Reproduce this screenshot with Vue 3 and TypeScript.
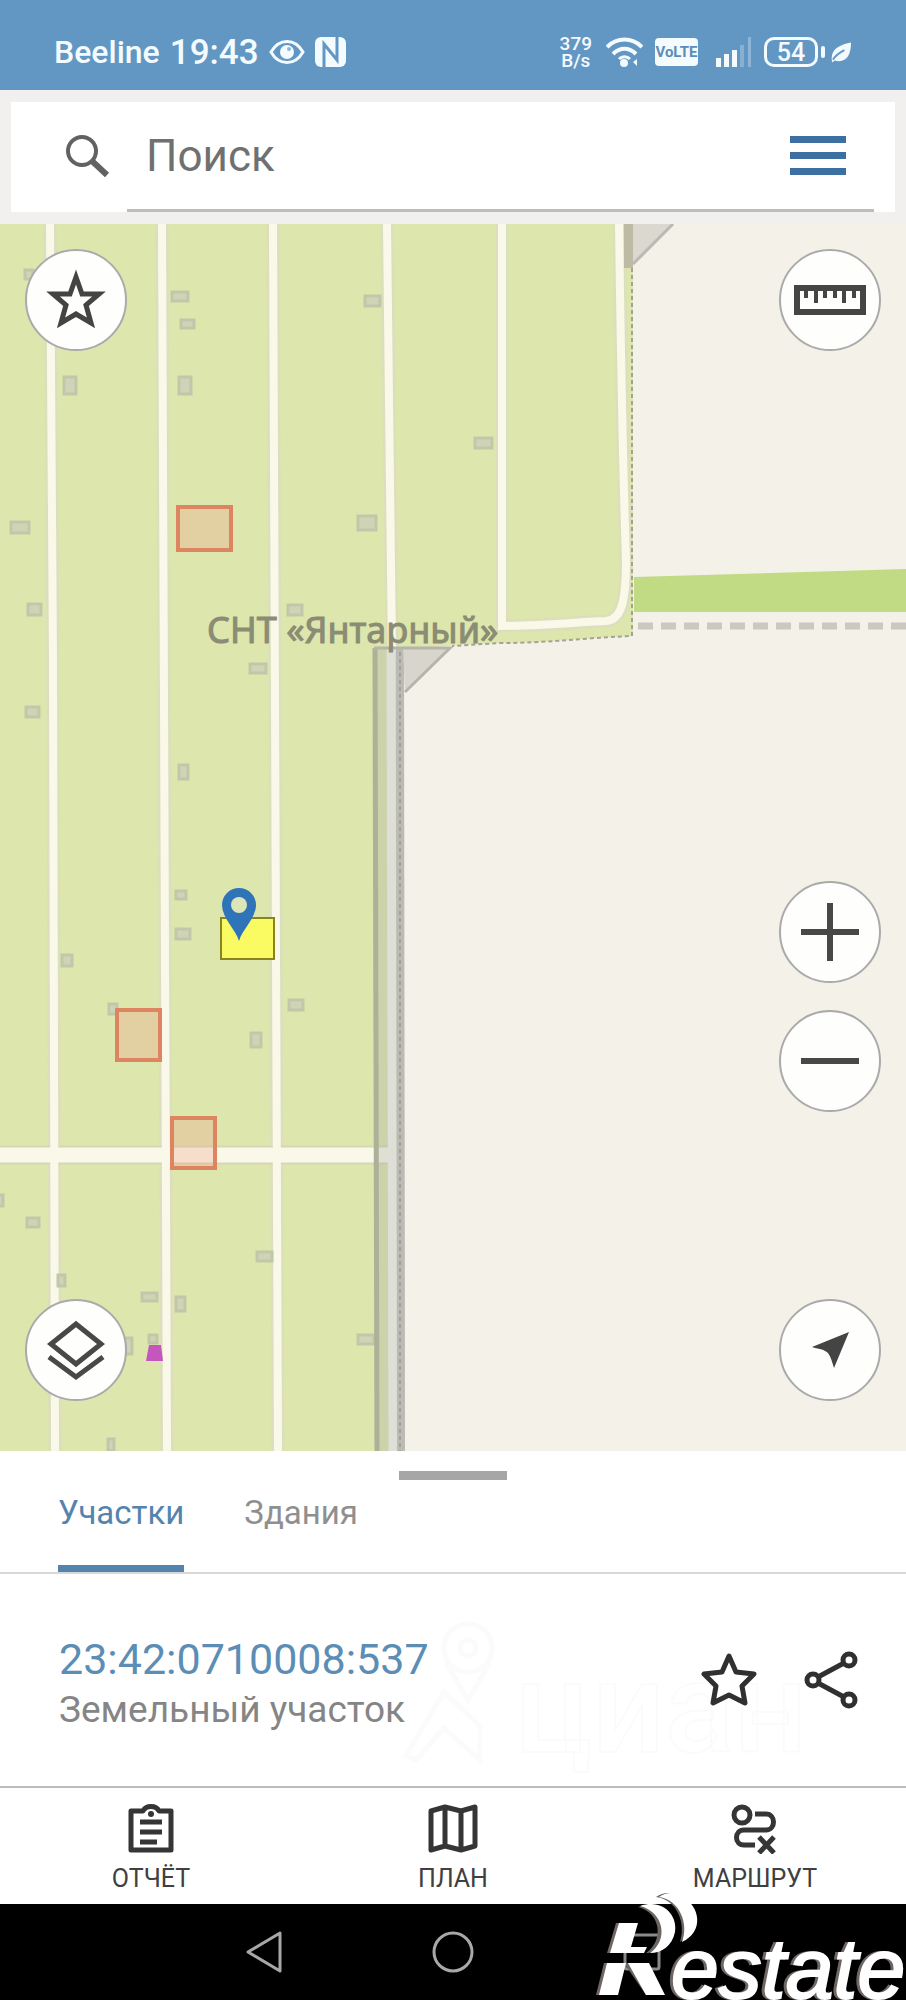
<script setup lang="ts">
import { ref } from 'vue'

interface Box {
  x: number
  y: number
  w: number
  h: number
}

const query = ref('')
const activeTab = ref('plots')

const tabs = [
  { id: 'plots', label: 'Участки' },
  { id: 'buildings', label: 'Здания' },
]

const roads = [
  'M50 224 L53 660 L55 1451',
  'M162 224 L164 700 L167 1451',
  'M273 224 L275 700 L278 1451',
  'M387 224 L389 400 L392 652',
  'M502 224 L502 626',
  'M619 224 C621 360 622 440 626 560 C626 600 622 620 606 621 C580 622 540 626 498 626',
]

const houses: Box[] = [
  { x: 172, y: 292, w: 16, h: 9 },
  { x: 181, y: 320, w: 13, h: 8 },
  { x: 64, y: 377, w: 12, h: 17 },
  { x: 179, y: 377, w: 12, h: 17 },
  { x: 365, y: 296, w: 15, h: 10 },
  { x: 475, y: 438, w: 17, h: 10 },
  { x: 11, y: 522, w: 18, h: 11 },
  { x: 358, y: 516, w: 18, h: 14 },
  { x: 28, y: 604, w: 13, h: 11 },
  { x: 288, y: 605, w: 14, h: 10 },
  { x: 250, y: 664, w: 16, h: 9 },
  { x: 26, y: 707, w: 13, h: 10 },
  { x: 179, y: 765, w: 9, h: 14 },
  { x: 176, y: 891, w: 10, h: 8 },
  { x: 176, y: 929, w: 14, h: 10 },
  { x: 62, y: 955, w: 10, h: 11 },
  { x: 109, y: 1004, w: 8, h: 10 },
  { x: 289, y: 1000, w: 14, h: 10 },
  { x: 251, y: 1033, w: 10, h: 14 },
  { x: -6, y: 1195, w: 9, h: 11 },
  { x: 27, y: 1218, w: 12, h: 9 },
  { x: 257, y: 1252, w: 15, h: 9 },
  { x: 58, y: 1275, w: 7, h: 11 },
  { x: 142, y: 1293, w: 15, h: 8 },
  { x: 176, y: 1297, w: 9, h: 14 },
  { x: 358, y: 1335, w: 16, h: 9 },
  { x: 125, y: 1338, w: 7, h: 16 },
  { x: 149, y: 1335, w: 8, h: 8 },
  { x: 108, y: 1439, w: 6, h: 12 },
  { x: 25, y: 270, w: 8, h: 9 },
]

const parcels: Box[] = [
  { x: 178, y: 507, w: 53, h: 43 },
  { x: 117, y: 1010, w: 43, h: 50 },
  { x: 172, y: 1118, w: 43, h: 50 },
]
</script>

<template>
  <div class="screen">
    <header class="status">
      <div class="status-side left">
        <span class="carrier">Beeline</span>
        <span class="clock">19:43</span>
        <svg width="36" height="26" viewBox="0 0 36 26" fill="none" stroke="#f3fbff" stroke-width="3">
          <path d="M2 13 C10 -1 26 -1 34 13 C26 27 10 27 2 13 Z" />
          <circle cx="18" cy="13" r="7" fill="#f3fbff" stroke="none" />
          <circle cx="20" cy="10" r="2" fill="#8fb6d6" stroke="none" />
        </svg>
        <svg width="31" height="30" viewBox="0 0 31 30" fill="none">
          <rect width="31" height="30" rx="6" fill="#f3fbff" />
          <path d="M9 30 V7 L22 23 V0" stroke="#6397c3" stroke-width="3" />
        </svg>
      </div>
      <div class="status-side right">
        <span class="speed"><span>379</span><span>B/s</span></span>
        <svg width="37" height="30" viewBox="0 0 37 30" fill="none" stroke="#f3fbff" stroke-width="4">
          <path d="M1 10 C11 0 26 0 36 10" />
          <path d="M7 17 C14 10 23 10 30 17" />
          <path d="M13 22 C16 19 21 19 24 22" stroke-width="3" />
          <circle cx="18" cy="26" r="4" fill="#f3fbff" stroke="none" />
          <path d="M31 22 V29 L27 25 Z" fill="#f3fbff" stroke="none" />
        </svg>
        <span class="volte">VoLTE</span>
        <svg class="signal" width="36" height="30" viewBox="0 0 36 30" fill="#f3fbff">
          <rect x="0" y="21" width="5" height="9" />
          <rect x="8" y="17" width="5" height="13" />
          <rect x="16" y="13" width="5" height="17" />
          <rect x="24" y="8" width="4" height="22" opacity=".25" />
          <rect x="32" y="0" width="3" height="30" opacity=".3" />
        </svg>
        <span class="battery">54</span>
        <svg width="22" height="22" viewBox="3 0 23 22">
          <path d="M5 20 C3 8 14 3 25 1 C25 14 20 23 8 20 L5 22 Z" fill="#f3fbff" />
          <path d="M6 19 C10 13 14 11 18 9" fill="none" stroke="#6397c3" stroke-width="2" />
        </svg>
      </div>
    </header>

    <div class="search-wrap">
      <form class="search" @submit.prevent>
        <svg class="magnifier" width="44" height="44" viewBox="0 0 44 44" fill="none" stroke="#626262">
          <circle cx="16" cy="16" r="14" stroke-width="4" />
          <path d="M26 26 L41 40" stroke-width="6" />
        </svg>
        <div class="field">
          <input v-model="query" type="text" placeholder="Поиск" aria-label="Поиск" />
          <button type="button" class="menu" aria-label="Меню">
            <i></i><i></i><i></i>
          </button>
        </div>
      </form>
    </div>

    <main class="map">
      <svg class="tiles" viewBox="0 224 906 1227" preserveAspectRatio="xMinYMin slice" aria-hidden="true">
        <rect x="0" y="224" width="906" height="1227" fill="#f4f1e8" />
        <path d="M0 224 H633 V636 C580 638 550 643 500 643 C450 645 420 648 403 650 V1451 H0 Z" fill="#dde6ac" />
        <path d="M634 577 L906 569 V612 H634 Z" fill="#c1db85" />
        <g fill="none" stroke="#dcdfbd" stroke-width="13">
          <path v-for="d in roads" :key="d" :d="d" />
        </g>
        <path d="M0 1155 H390" fill="none" stroke="#d5d8b4" stroke-width="19" />
        <g fill="none" stroke="#faf8e9" stroke-width="8">
          <path v-for="d in roads" :key="d" :d="d" />
          <path d="M0 1155 H390" stroke-width="15" />
        </g>
        <path d="M638 626 H906" stroke="#cbc8be" stroke-width="7" stroke-dasharray="15 8" />
        <g fill="#d0d4b6" stroke="#c2c7aa" stroke-width="3">
          <rect v-for="(b, i) in houses" :key="i" :x="b.x" :y="b.y" :width="b.w" :height="b.h" />
        </g>
        <path d="M146 1361 L149 1345 H161 L163 1361 Z" fill="#c556bd" />
        <path d="M624 224 H633 V268 H624 Z" fill="#bdbba4" />
        <path d="M633 224 H674 L633 264 Z" fill="#dbd8d0" />
        <path d="M673 224 L633 264" stroke="#bcb9b2" stroke-width="3" />
        <path d="M373 648 H403 L405 1451 H375 Z" fill="#a4a4a4" fill-opacity=".3" />
        <path d="M391 648 L393 1451" stroke="#dedfd7" stroke-width="9" />
        <path d="M375 648 L377 1451" stroke="#adb198" stroke-width="5" />
        <path d="M400 648 L401 1451" stroke="#bcbab4" stroke-width="8" />
        <path d="M403 648 H451 L405 692 Z" fill="#d8d5cd" />
        <path d="M374 648 H450 L405 692" fill="none" stroke="#b7b4ac" stroke-width="3" />
        <g fill="none" stroke="#a4a296" stroke-width="2" stroke-dasharray="4 3">
          <path d="M632 268 V636 C580 638 550 643 500 643 L452 646" />
          <path d="M400 652 V1451" />
        </g>
        <text x="207" y="643" class="place">СНТ «Янтарный»</text>
        <g fill="#f2a08a" fill-opacity=".3" stroke="#dd8460" stroke-width="4">
          <rect v-for="p in parcels" :key="p.y" :x="p.x" :y="p.y" :width="p.w" :height="p.h" />
        </g>
        <rect x="221" y="918" width="53" height="41" fill="#fafa62" stroke="#8a8420" stroke-width="2" />
        <path d="M239 941 C236 930 222 918 222 905 A17 17 0 0 1 256 905 C256 918 242 930 239 941 Z" fill="#2f74b8" />
        <circle cx="239" cy="905" r="8" fill="#dde6b8" />
      </svg>

      <div class="controls top">
        <button type="button" class="round" aria-label="Избранное">
          <svg width="62" height="62" viewBox="0 0 62 62" fill="none" stroke="#444" stroke-width="5">
            <path d="M31 8 L37 25 L54 25 L41 36 L46 54 L31 45 L16 54 L21 36 L8 25 L25 25 Z" />
          </svg>
        </button>
        <button type="button" class="round" aria-label="Линейка">
          <svg width="72" height="30" viewBox="0 0 72 30" fill="none" stroke="#454545">
            <rect x="3" y="3" width="66" height="24" stroke-width="6" />
            <path d="M12 5 V13 M22 5 V18 M31 5 V13 M41 5 V13 M50 5 V18 M60 5 V13" stroke-width="4" />
          </svg>
        </button>
      </div>

      <div class="controls bottom">
        <button type="button" class="round" aria-label="Слои">
          <svg width="62" height="62" viewBox="0 0 62 62" fill="none" stroke="#484848" stroke-width="5">
            <path d="M31 5 L56 25 L31 45 L6 25 Z" />
            <path d="M4 38 L31 58 L58 38" />
          </svg>
        </button>
        <div class="stack">
          <div class="zoom">
            <button type="button" class="round" aria-label="Приблизить">
              <svg width="60" height="60" viewBox="0 0 60 60" stroke="#484848" stroke-width="6">
                <path d="M1 30 H59 M30 1 V59" />
              </svg>
            </button>
            <button type="button" class="round" aria-label="Отдалить">
              <svg width="60" height="60" viewBox="0 0 60 60" stroke="#484848" stroke-width="6">
                <path d="M1 30 H59" />
              </svg>
            </button>
          </div>
          <button type="button" class="round" aria-label="Моё местоположение">
            <svg width="38" height="38" viewBox="0 0 38 38" fill="#444">
              <path d="M38 1 L23 37 C21 31 20 26 17 22 C13 18 7 18 1 16 Z" />
            </svg>
          </button>
        </div>
      </div>
    </main>

    <section class="sheet">
      <div class="handle"></div>
      <nav class="tabs" role="tablist">
        <button
          v-for="t in tabs"
          :key="t.id"
          type="button"
          role="tab"
          :aria-selected="activeTab === t.id"
          :class="['tab', { active: activeTab === t.id }]"
          @click="activeTab = t.id"
        >
          {{ t.label }}
        </button>
      </nav>
      <article class="item">
        <svg class="mark" width="440" height="170" viewBox="0 0 440 170" fill="none" stroke="#fbfbfb" stroke-width="5">
          <circle cx="68" cy="32" r="24" />
          <circle cx="68" cy="32" r="8" />
          <path d="M46 46 L68 84 L90 46 M6 140 L44 76 L80 110 L80 144 L44 112 L16 144 Z" />
          <text x="115" y="136" class="mark-text">циан</text>
        </svg>
        <div class="item-text">
          <a href="#" class="number">23:42:0710008:537</a>
          <p class="kind">Земельный участок</p>
        </div>
        <div class="actions">
          <button type="button" aria-label="В избранное">
            <svg width="56" height="56" viewBox="0 0 56 56" fill="none" stroke="#303030" stroke-width="5" stroke-linejoin="round">
              <path d="M28 4 L35 20 L53 22 L41 34 L44 51 L28 43 L12 51 L15 34 L3 22 L21 20 Z" />
            </svg>
          </button>
          <button type="button" aria-label="Поделиться">
            <svg width="54" height="58" viewBox="0 0 54 58" fill="none" stroke="#303030" stroke-width="5">
              <circle cx="9" cy="29" r="6" />
              <circle cx="45" cy="9" r="6" />
              <circle cx="45" cy="49" r="6" />
              <path d="M14 26 L40 12 M14 32 L40 46" />
            </svg>
          </button>
        </div>
      </article>
    </section>

    <nav class="bottom-nav">
      <button type="button">
        <svg width="50" height="50" viewBox="0 0 50 50" fill="none" stroke="#353535" stroke-width="5" stroke-linejoin="round">
          <path d="M5 7 H17 C20 1 30 1 33 7 H45 V46 H5 Z" />
          <path d="M14 18 H36 M14 28 H36 M14 38 H31" />
          <circle cx="25" cy="10" r="3" fill="#353535" stroke="none" />
        </svg>
        <span>ОТЧЁТ</span>
      </button>
      <button type="button">
        <svg width="50" height="50" viewBox="0 0 50 50" fill="none" stroke="#353535" stroke-width="5" stroke-linejoin="round">
          <path d="M3 7 L17 3 L33 7 L47 3 V42 L33 46 L17 42 L3 46 Z M17 3 V42 M33 7 V46" />
        </svg>
        <span>ПЛАН</span>
      </button>
      <button type="button">
        <svg width="50" height="50" viewBox="0 0 50 50" fill="none" stroke="#353535" stroke-width="5">
          <circle cx="12" cy="11" r="8" />
          <path d="M25 10 H36 C46 10 46 26 36 26 H14 C4 26 4 41 14 41 H25" />
          <path d="M29 33 L44 49 M44 33 L29 49" />
        </svg>
        <span>МАРШРУТ</span>
      </button>
    </nav>

    <footer class="system">
      <button type="button" aria-label="Назад">
        <svg width="44" height="44" viewBox="0 0 44 44" fill="none" stroke="#a8a8a8" stroke-width="3" stroke-linejoin="round">
          <path d="M38 3 V41 L6 22 Z" />
        </svg>
      </button>
      <button type="button" aria-label="Домой">
        <svg width="44" height="44" viewBox="0 0 44 44" fill="none" stroke="#a8a8a8" stroke-width="3">
          <circle cx="22" cy="22" r="19" />
        </svg>
      </button>
      <button type="button" aria-label="Недавние">
        <svg width="44" height="44" viewBox="0 0 44 44" fill="none" stroke="#8a8a8a" stroke-width="3">
          <rect x="5" y="5" width="34" height="34" rx="2" />
        </svg>
      </button>
      <svg class="brand" width="326" height="120" viewBox="0 0 326 120" role="img" aria-label="Restate">
        <g fill="#6e6663">
          <path d="M36 43 H55 L47 73 H27 Z M24 83 H46 L35 115 H16 Z M44 83 L66 115 H80 L60 83 Z" />
          <path d="M58 27 C80 20 94 38 92 52 C90 64 79 73 66 73 C85 60 80 32 58 27 Z" />
          <path d="M76 17 C83 12 92 12 98 16 C112 26 118 50 100 62 C106 44 98 20 76 17 Z" />
        </g>
        <g fill="#fff">
          <path d="M39 43 H58 L51 67 H67 L64 73 H30 Z M27 83 H46 L38 115 H19 Z M48 83 H69 L85 115 H66 Z" />
          <path d="M60 26 C83 18 98 36 95 52 C92 66 82 73 70 73 C89 60 84 32 60 26 Z" />
          <path d="M79 17 C86 12 95 12 101 16 C121 26 124 52 102 62 C109 44 100 20 79 17 Z" />
        </g>
        <text x="91" y="118" class="brand-text">estate</text>
      </svg>
    </footer>
  </div>
</template>

<style>
body {
  margin: 0;
  background: #fff;
}
</style>

<style scoped>
.screen {
  display: flex;
  flex-direction: column;
  min-height: 100vh;
  font-family: Roboto, 'Noto Sans', sans-serif;
  overflow-x: hidden;
}
button {
  border: 0;
  padding: 0;
  margin: 0;
  background: none;
  font: inherit;
  color: inherit;
  cursor: pointer;
}
svg {
  display: block;
  flex: none;
}

.status {
  box-sizing: border-box;
  height: 90px;
  padding: 14px 54px 0;
  display: flex;
  align-items: center;
  justify-content: space-between;
  background: #6397c3;
  color: #f3fbff;
}
.status-side {
  display: flex;
  align-items: center;
}
.left {
  gap: 10px;
}
.carrier {
  font-size: 32px;
  font-weight: 500;
}
.clock {
  font-size: 35px;
  font-weight: 500;
}
.right {
  gap: 12px;
}
.speed {
  display: flex;
  flex-direction: column;
  align-items: center;
  margin-right: 2px;
  font-size: 19px;
  line-height: 17px;
  font-weight: 500;
}
.volte {
  width: 43px;
  height: 28px;
  border-radius: 4px;
  background: #f3fbff;
  color: #5c8db8;
  font-size: 15px;
  line-height: 28px;
  font-weight: 700;
  text-align: center;
}
.signal {
  margin-left: 6px;
}
.battery {
  position: relative;
  box-sizing: border-box;
  width: 54px;
  height: 30px;
  border: 3px solid #f3fbff;
  border-radius: 10px;
  font-size: 25px;
  line-height: 25px;
  font-weight: 500;
  text-align: center;
}
.battery::after {
  content: '';
  position: absolute;
  right: -10px;
  top: 6px;
  width: 4px;
  height: 12px;
  border-radius: 2px;
  background: #f3fbff;
}

.search-wrap {
  padding: 12px 11px;
  background: #f1f0ef;
}
.search {
  display: flex;
  align-items: center;
  height: 110px;
  padding: 0 21px 0 55px;
  background: #fff;
}
.magnifier {
  margin-right: 17px;
}
.field {
  flex: 1;
  box-sizing: border-box;
  height: 110px;
  display: flex;
  align-items: center;
  padding: 0 28px 0 19px;
  border-bottom: 3px solid #bdbdbd;
}
.field input {
  flex: 1;
  min-width: 0;
  border: 0;
  padding: 0;
  outline: 0;
  background: none;
  font: inherit;
  font-size: 44px;
  color: #333;
}
.field input::placeholder {
  color: #707070;
  opacity: 1;
}
.menu {
  width: 56px;
  display: flex;
  flex-direction: column;
  gap: 9px;
}
.menu i {
  height: 7px;
  background: #3d6fa3;
}

.map {
  position: relative;
  flex: 1 0 700px;
  overflow: hidden;
}
.tiles {
  position: absolute;
  inset: 0;
  width: 100%;
  height: 100%;
}
.place {
  font-family: 'Noto Sans', 'Open Sans', sans-serif;
  font-size: 36px;
  fill: #8a8c74;
  stroke: #8a8c74;
  stroke-width: 1px;
}
.controls {
  position: absolute;
  left: 25px;
  right: 25px;
  display: flex;
  justify-content: space-between;
  align-items: flex-end;
}
.top {
  top: 25px;
}
.bottom {
  bottom: 50px;
}
.round {
  box-sizing: border-box;
  width: 102px;
  height: 102px;
  border: 2px solid #aaa;
  border-radius: 50%;
  background: #fefefd;
  display: flex;
  align-items: center;
  justify-content: center;
}
.stack {
  display: flex;
  flex-direction: column;
  gap: 187px;
}
.zoom {
  display: flex;
  flex-direction: column;
  gap: 27px;
}

.sheet {
  background: #fff;
}
.handle {
  width: 108px;
  height: 9px;
  margin: 20px auto 0;
  background: #a6a6a6;
}
.tabs {
  display: flex;
  gap: 60px;
  padding: 0 58px;
  border-bottom: 2px solid #d9d9d9;
}
.tab {
  box-sizing: border-box;
  height: 92px;
  padding-bottom: 21px;
  border-bottom: 7px solid transparent;
  font-size: 33px;
  color: #8f8f8f;
}
.tab.active {
  color: #5484ad;
  border-bottom-color: #5484ad;
}
.item {
  position: relative;
  box-sizing: border-box;
  height: 212px;
  padding: 0 48px 0 59px;
  display: flex;
  align-items: center;
  justify-content: space-between;
}
.item-text {
  position: relative;
  padding-top: 7px;
}
.number {
  display: block;
  font-size: 43px;
  line-height: 52px;
  color: #5b8db5;
  text-decoration: none;
}
.kind {
  margin: 0;
  font-size: 37px;
  line-height: 50px;
  color: #858585;
}
.mark {
  position: absolute;
  left: 400px;
  top: 42px;
}
.mark-text {
  font-family: Roboto, 'Noto Sans', sans-serif;
  font-size: 128px;
  font-weight: 500;
  stroke-width: 2px;
}
.actions {
  position: relative;
  display: flex;
  align-items: center;
  gap: 47px;
}

.bottom-nav {
  box-sizing: border-box;
  height: 118px;
  display: grid;
  grid-template-columns: repeat(3, 1fr);
  border-top: 2px solid #bcbcbc;
  background: #fff;
}
.bottom-nav button {
  display: flex;
  flex-direction: column;
  align-items: center;
  padding-top: 16px;
  gap: 10px;
  font-size: 25px;
  line-height: 30px;
  color: #404040;
}

.system {
  position: relative;
  height: 96px;
  display: flex;
  align-items: center;
  justify-content: center;
  gap: 145px;
  background: #000;
}
.brand {
  position: absolute;
  right: 0;
  bottom: 0;
}
.brand-text {
  font-family: 'Liberation Sans Narrow', 'Liberation Sans', sans-serif;
  font-style: italic;
  font-size: 86px;
  fill: #fff;
  stroke: #fff;
  stroke-width: 2px;
  filter: drop-shadow(-3px 0 0 #6e6663);
}
</style>
